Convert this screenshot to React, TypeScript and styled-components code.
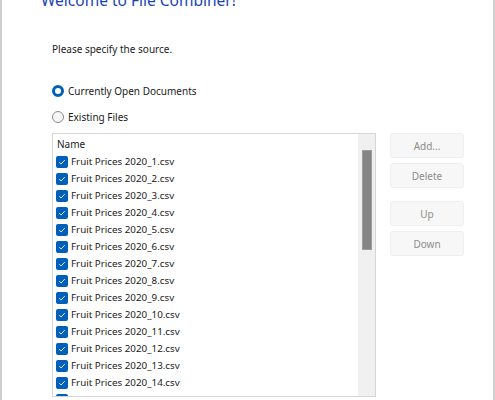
import React from "react";
import styled, { createGlobalStyle } from "styled-components";

const GlobalStyle = createGlobalStyle`
  html, body {
    margin: 0;
    padding: 0;
    background: #ffffff;
    overflow: hidden;
  }
  body {
    font-family: "Noto Sans", "Open Sans", sans-serif;
    font-size: 10px;
    color: #1a1a1a;
  }
`;

const files = Array.from({ length: 15 }, (_, i) => `Fruit Prices 2020_${i + 1}.csv`);

const Window = styled.div`
  width: 495px;
  height: 400px;
  box-sizing: border-box;
  border-left: 2px solid #cfcfcf;
  border-right: 2px solid #cfcfcf;
  background: #ffffff;
  overflow: hidden;
  padding-left: 39px;
`;

const Title = styled.h1`
  margin: -10px 0 0 0;
  font-size: 15.5px;
  font-weight: 400;
  line-height: 20px;
  color: #1a44b4;
`;

const Body = styled.div`
  padding-left: 11px;
`;

const Prompt = styled.p`
  margin: 31px 0 0 0;
  line-height: 16px;
`;

const RadioGroup = styled.div`
  display: flex;
  flex-direction: column;
  gap: 10px;
  margin-top: 26px;
`;

const RadioRow = styled.label`
  display: flex;
  align-items: center;
  gap: 4px;
  height: 16px;
`;

const RadioDot = styled.span<{ checked?: boolean }>`
  width: 12px;
  height: 12px;
  border-radius: 50%;
  box-sizing: border-box;
  flex: none;
  ${({ checked }) =>
    checked
      ? `
    background: #ffffff;
    border: 3.5px solid #005fb8;
  `
      : `
    background: #f6f6f6;
    border: 1px solid #8a8a8a;
  `}
`;

const Content = styled.div`
  display: flex;
  gap: 14px;
  margin-top: 8px;
`;

const ListBox = styled.div`
  width: 324px;
  height: 264px;
  box-sizing: border-box;
  border: 1px solid #d6d6d6;
  display: flex;
  overflow: hidden;
`;

const ListItems = styled.div`
  flex: 1;
  padding: 1px 0 0 3px;
`;

const Header = styled.div`
  height: 18px;
  line-height: 18px;
  padding-left: 1px;
`;

const Row = styled.div`
  display: flex;
  align-items: center;
  gap: 3px;
  height: 17px;
  font-size: 9.8px;
`;

const Check = styled.span`
  width: 12px;
  height: 12px;
  border-radius: 2px;
  background: #005fb8;
  display: flex;
  align-items: center;
  justify-content: center;
  flex: none;
`;

const ScrollTrack = styled.div`
  width: 17px;
  background: #f0f0f0;
  display: flex;
  justify-content: center;
  padding-top: 16px;
  box-sizing: border-box;
`;

const ScrollThumb = styled.div`
  width: 10px;
  height: 100px;
  background: #858585;
  border: 1px solid #9c9c9c;
  box-sizing: border-box;
`;

const Buttons = styled.div`
  display: flex;
  flex-direction: column;
  gap: 5px;
`;

const Button = styled.button<{ spaced?: boolean }>`
  width: 74px;
  height: 25px;
  margin-top: ${({ spaced }) => (spaced ? "8px" : "0")};
  background: #f7f7f7;
  border: 1px solid #efefef;
  border-radius: 3px;
  color: #8d8d8d;
  font-family: inherit;
  font-size: 10px;
  padding: 0;
`;

const CheckIcon = () => (
  <svg width="8" height="8" viewBox="0 0 8 8">
    <path d="M1.2 4.2 L3.1 6 L6.8 2" fill="none" stroke="#dbe8f7" strokeWidth="1" />
  </svg>
);

export default function App() {
  return (
    <>
      <GlobalStyle />
      <Window>
        <Title>Welcome to File Combiner!</Title>
        <Body>
          <Prompt>Please specify the source.</Prompt>
          <RadioGroup>
            <RadioRow>
              <RadioDot checked />
              Currently Open Documents
            </RadioRow>
            <RadioRow>
              <RadioDot />
              Existing Files
            </RadioRow>
          </RadioGroup>
          <Content>
            <ListBox>
              <ListItems>
                <Header>Name</Header>
                {files.map((f) => (
                  <Row key={f}>
                    <Check>
                      <CheckIcon />
                    </Check>
                    {f}
                  </Row>
                ))}
              </ListItems>
              <ScrollTrack>
                <ScrollThumb />
              </ScrollTrack>
            </ListBox>
            <Buttons>
              <Button>Add...</Button>
              <Button>Delete</Button>
              <Button spaced>Up</Button>
              <Button>Down</Button>
            </Buttons>
          </Content>
        </Body>
      </Window>
    </>
  );
}
